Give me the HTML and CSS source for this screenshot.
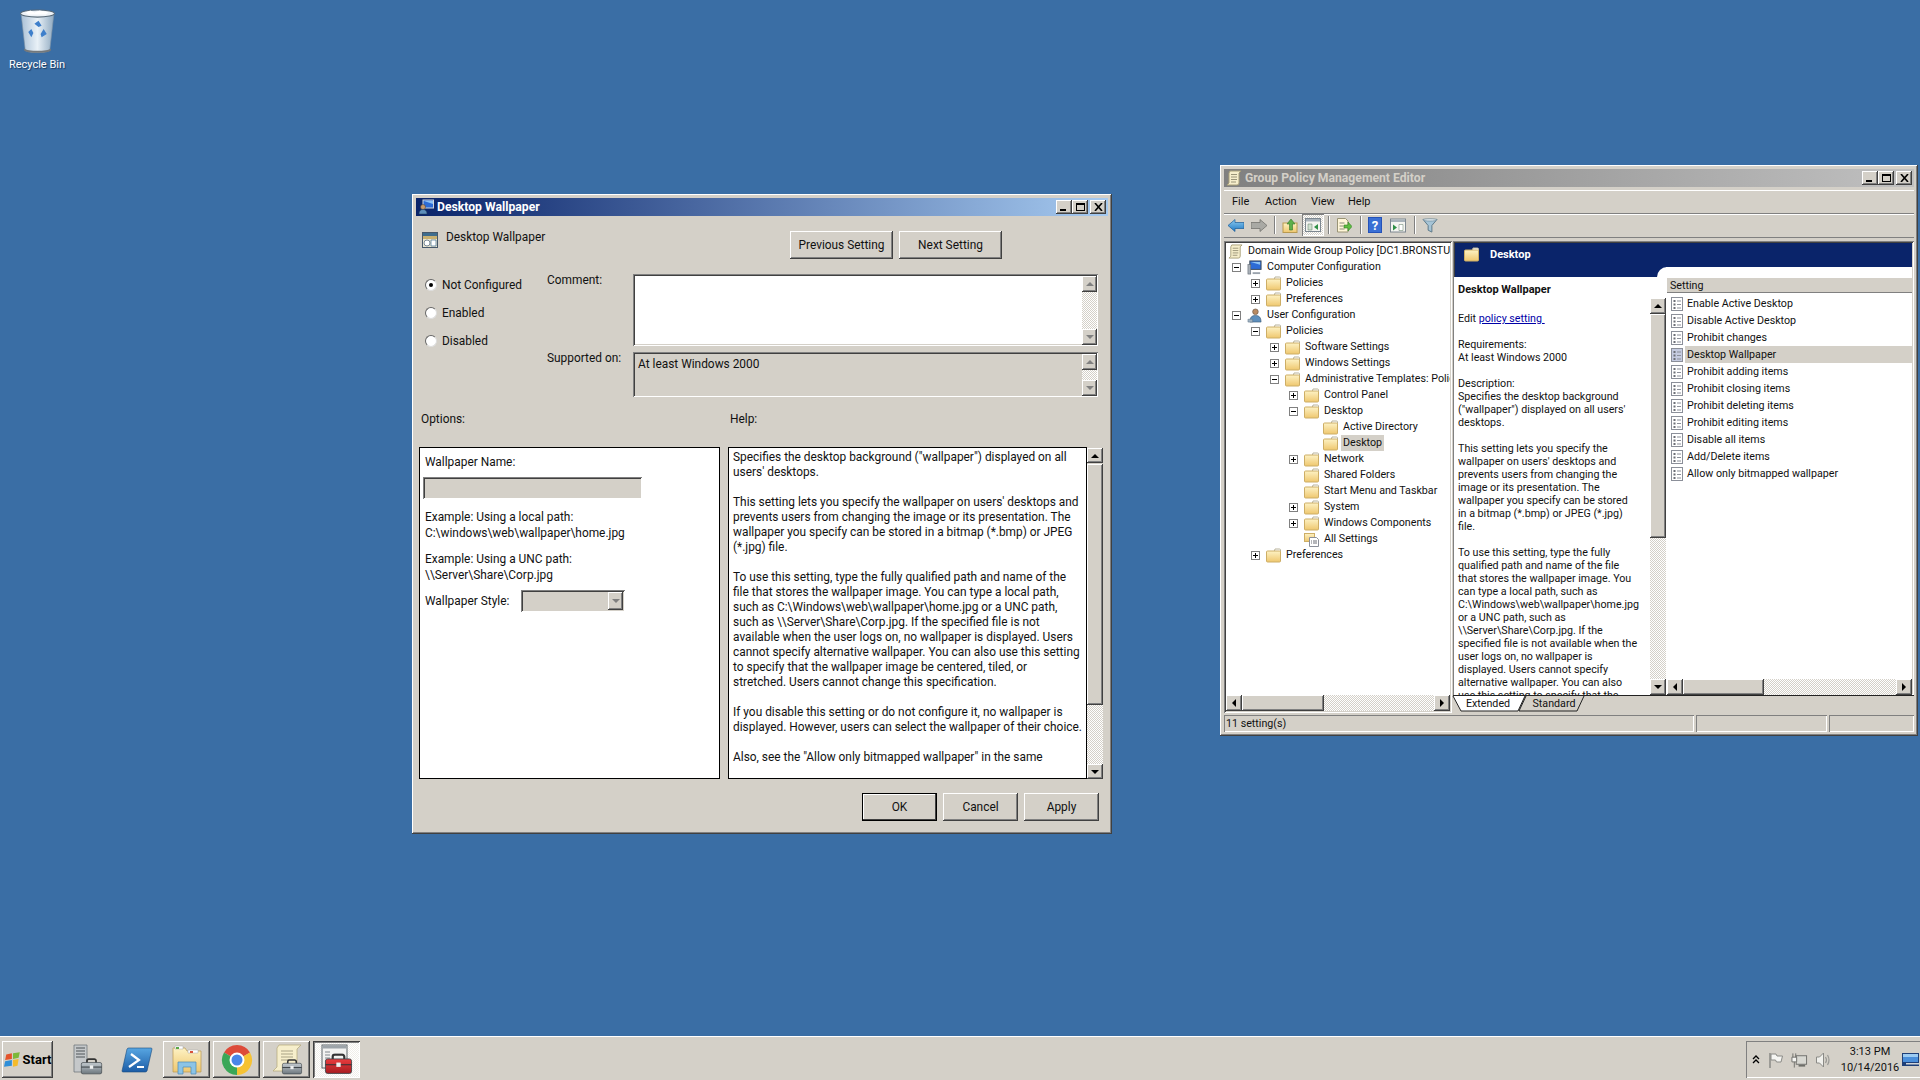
FILE: index.html
```html
<!DOCTYPE html>
<html lang="en">
	<head>
		<meta charset="UTF-8" />
		<title>Desktop Wallpaper</title>
		<link rel="stylesheet" href="styles.css">
	</head>
	<body>
		<!-- shared icons -->
		<svg class="defs" width="0" height="0">
			<defs>
				<linearGradient id="fold" x1="0" y1="0" x2="0" y2="1"><stop offset="0" stop-color="#fdf2c4"/><stop offset="1" stop-color="#efc76e"/></linearGradient>
				<linearGradient id="steel" x1="0" y1="0" x2="0" y2="1"><stop offset="0" stop-color="#c4cbd0"/><stop offset="1" stop-color="#6d777e"/></linearGradient>
				<linearGradient id="redbox" x1="0" y1="0" x2="0" y2="1"><stop offset="0" stop-color="#ea3c3e"/><stop offset="1" stop-color="#a81c20"/></linearGradient>
				<linearGradient id="ps" x1="0" y1="0" x2="0" y2="1"><stop offset="0" stop-color="#58a6e2"/><stop offset="1" stop-color="#1c5ca6"/></linearGradient>
				<linearGradient id="bluearrow" x1="0" y1="0" x2="0" y2="1"><stop offset="0" stop-color="#8ecbf0"/><stop offset="1" stop-color="#1f79c4"/></linearGradient>
				<linearGradient id="bin" x1="0" y1="0" x2="1" y2="0"><stop offset="0" stop-color="#a9c0d6"/><stop offset=".5" stop-color="#e9f1f7"/><stop offset="1" stop-color="#8fa9c0"/></linearGradient>
				<symbol id="folder" viewBox="0 0 15 14">
					<path d="M9 .5h4.5a1 1 0 0 1 1 1V4H8z" fill="#fff" stroke="#b8b29a"/>
					<rect x=".5" y="2.5" width="14" height="11" rx="1" fill="url(#fold)" stroke="#cdae66"/>
				</symbol>
				<symbol id="doc" viewBox="0 0 12 14">
					<rect x=".5" y=".5" width="11" height="13" fill="var(--doc-bg,#fff)" stroke="#8b8f99"/>
					<path d="M2.5 3h2v2h-2zM2.5 6.500h2v2h-2zM2.5 10h2v2h-2z" fill="#6c6f76"/>
					<path d="M6 4h4M6 7.500h4M6 11h4" stroke="#8b8f99"/>
				</symbol>
				<symbol id="scroll" viewBox="0 0 16 16">
					<path d="M4 1h11l-2 2v10a2 2 0 0 1-2 2H1l2-2V3z" fill="#f6eecb" stroke="#a89f78"/>
					<path d="M5 4.500h6M5 7h6M5 9.500h6M5 12h5" stroke="#9a9478"/>
				</symbol>
				<symbol id="toolbox" viewBox="0 0 20 15">
					<path d="M6 5V2.500a1.500 1.500 0 0 1 1.500-1.500h5A1.500 1.500 0 0 1 14 2.500V5" fill="none" stroke="#333" stroke-width="1.500"/>
					<rect x="1" y="4" width="18" height="10" rx="1.500" fill="var(--box,url(#steel))" stroke="#3e454a" stroke-width=".6"/>
					<path d="M1 8h18" stroke="#2d3337" stroke-width=".8"/>
					<rect x="8.500" y="6.500" width="3" height="3" fill="#eef0f0"/>
				</symbol>
				<symbol id="smallpc" viewBox="0 0 16 16">
					<rect x="3" y="1" width="12" height="9" fill="#2c6bd6" stroke="#3a4654"/>
					<path d="M4 2h10v3z" fill="#8cc2f5"/>
					<rect x="1" y="5" width="3" height="10" fill="#a9b0b8" stroke="#5b6470" stroke-width=".6"/>
					<path d="M6 13h8v2H6z" fill="#9aa3ad"/>
				</symbol>
				<symbol id="user" viewBox="0 0 16 16">
					<circle cx="9" cy="4" r="3" fill="#b98b62" stroke="#5a4a3a" stroke-width=".6"/>
					<path d="M3 15c0-5 2-7 6-7s6 2 6 7z" fill="#5e8fbc" stroke="#36536e" stroke-width=".6"/>
					<path d="M1 12h5v3H1z" fill="#9fb2c2" stroke="#5b6f82" stroke-width=".5"/>
				</symbol>
			</defs>
		</svg>

		<div class="desktop">
			<div class="recycle">
				<svg class="bin-icon" viewBox="0 0 36 44">
					<path d="M2 5l4 35c0 2 6 3 12 3s12-1 12-3l4-35z" fill="url(#bin)" stroke="#7e93a6" stroke-width=".6"/>
					<ellipse cx="18" cy="5" rx="16.500" ry="3.500" fill="#eef3f7" stroke="#566877"/>
					<path d="M6 4l5-2 4 2 5-2 5 1 4 1-3 2H9z" fill="#fff"/>
					<path d="M5 39c3 3 23 3 26 0v2c-2 3-24 3-26 0z" fill="#73787c"/>
					<path d="M15 15l4-3 3 5-3 1zM24 20l3 5-5 3-1-3zM12 28l-3-5 3-3 2 4 z" fill="#3e7fcb"/>
				</svg>
				<div class="recycle-label">Recycle Bin</div>
			</div>

			<!-- dialog -->
			<div class="win dialog">
				<div class="titlebar">
					<svg class="ic16" viewBox="0 0 16 16">
						<rect x="5" y="1" width="10.500" height="8" fill="#2c6bd6" stroke="#cfd6dc"/>
						<path d="M6 2h9v3z" fill="#8cc2f5"/>
						<circle cx="5" cy="8" r="2.500" fill="#c79a6e" stroke="#40372c" stroke-width=".5"/>
						<path d="M1 15c0-3 1.500-4.500 4-4.500S9 12 9 15z" fill="#5e8fbc" stroke="#25405a" stroke-width=".5"/>
					</svg>
					<span class="title-text">Desktop Wallpaper</span>
					<div class="wbtns">
						<div class="wbtn raised"><span class="g-min"></span></div>
						<div class="wbtn raised"><span class="g-max"></span></div>
						<div class="wbtn raised closebtn">
							<svg viewBox="0 0 9 8" width="9" height="8"><path d="M1 0l7 8M8 0L1 8" stroke="#000" stroke-width="1.600"/></svg>
						</div>
					</div>
				</div>
				<div class="dlg-head">
					<svg class="head-icon" viewBox="0 0 16 16">
						<rect x=".5" y=".5" width="15" height="15" fill="#e8e4d0" stroke="#46586a"/>
						<rect x="1" y="1" width="14" height="3" fill="#3f6d8e"/>
						<rect x="1" y="4" width="14" height="3" fill="#c8b070"/>
						<circle cx="5" cy="11" r="3" fill="#fff" stroke="#7b8a96"/>
						<path d="M9 8h5v6H9z" fill="#fff" stroke="#3f6d8e" stroke-width=".7"/>
					</svg>
					<span class="head-text">Desktop Wallpaper</span>
					<div class="head-btns">
						<div class="btn raised">Previous Setting</div>
						<div class="btn raised">Next Setting</div>
					</div>
				</div>
				<div class="config">
					<div class="radios">
						<div class="radio-row"><span class="radio on"></span>Not Configured</div>
						<div class="radio-row"><span class="radio"></span>Enabled</div>
						<div class="radio-row"><span class="radio"></span>Disabled</div>
					</div>
					<div class="config-fields">
						<div class="cfg-label">Comment:</div>
						<div class="box sunken box-comment">
							<div class="box-text"></div>
							<div class="sbar">
								<div class="sb-btn raised"><span class="arrow up off"></span></div>
								<div class="sb-track"></div>
								<div class="sb-btn raised"><span class="arrow down off"></span></div>
							</div>
						</div>
						<div class="cfg-label">Supported on:</div>
						<div class="box sunken box-support">
							<div class="box-text">At least Windows 2000</div>
							<div class="sbar">
								<div class="sb-btn raised"><span class="arrow up off"></span></div>
								<div class="sb-track"></div>
								<div class="sb-btn raised"><span class="arrow down off"></span></div>
							</div>
						</div>
					</div>
				</div>
				<div class="section-labels">
					<div class="lbl-options">Options:</div>
					<div>Help:</div>
				</div>
				<div class="panels">
					<div class="panel options">
						<div>Wallpaper Name:</div>
						<div class="field sunken"></div>
						<div class="example">Example: Using a local path:<br>C:\windows\web\wallpaper\home.jpg</div>
						<div class="example">Example: Using a UNC path:<br>\\Server\Share\Corp.jpg</div>
						<div class="style-row">
							<span class="style-label">Wallpaper Style:</span>
							<div class="combo sunken">
								<div class="combo-btn raised"><span class="arrow down off"></span></div>
							</div>
						</div>
					</div>
					<div class="help-wrap">
						<div class="panel help">Specifies the desktop background ("wallpaper") displayed on all<br>users' desktops.<br><br>This setting lets you specify the wallpaper on users' desktops and<br>prevents users from changing the image or its presentation. The<br>wallpaper you specify can be stored in a bitmap (*.bmp) or JPEG<br>(*.jpg) file.<br><br>To use this setting, type the fully qualified path and name of the<br>file that stores the wallpaper image. You can type a local path,<br>such as C:\Windows\web\wallpaper\home.jpg or a UNC path,<br>such as \\Server\Share\Corp.jpg. If the specified file is not<br>available when the user logs on, no wallpaper is displayed. Users<br>cannot specify alternative wallpaper. You can also use this setting<br>to specify that the wallpaper image be centered, tiled, or<br>stretched. Users cannot change this specification.<br><br>If you disable this setting or do not configure it, no wallpaper is<br>displayed. However, users can select the wallpaper of their choice.<br><br>Also, see the "Allow only bitmapped wallpaper" in the same</div>
						<div class="sbar help-sbar">
							<div class="sb-btn raised"><span class="arrow up"></span></div>
							<div class="sb-thumb raised"></div>
							<div class="sb-track"></div>
							<div class="sb-btn raised"><span class="arrow down"></span></div>
						</div>
					</div>
				</div>
				<div class="dlg-foot">
					<div class="btn foot-btn default raised">OK</div>
					<div class="btn foot-btn raised">Cancel</div>
					<div class="btn foot-btn raised">Apply</div>
				</div>
			</div>

			<!-- group policy editor -->
			<div class="win gpme">
				<div class="titlebar inactive">
					<svg class="ic16"><use href="#scroll"/></svg>
					<span class="title-text">Group Policy Management Editor</span>
					<div class="wbtns">
						<div class="wbtn raised"><span class="g-min"></span></div>
						<div class="wbtn raised"><span class="g-max"></span></div>
						<div class="wbtn raised closebtn">
							<svg viewBox="0 0 9 8" width="9" height="8"><path d="M1 0l7 8M8 0L1 8" stroke="#000" stroke-width="1.600"/></svg>
						</div>
					</div>
				</div>
				<div class="menubar">
					<span class="m-file">File</span><span class="m-action">Action</span><span class="m-view">View</span><span>Help</span>
				</div>
				<div class="toolbar">
					<svg class="tb-ic tb-nav" viewBox="0 0 16 14"><path d="M0 7l7-6v3h9v6H7v3z" fill="url(#bluearrow)" stroke="#1a5c9a" stroke-width=".7"/></svg>
					<svg class="tb-ic tb-nav" viewBox="0 0 16 14"><path d="M16 7L9 1v3H0v6h9v3z" fill="#a9a9a4" stroke="#6a6a66" stroke-width=".7"/></svg>
					<span class="tb-sep"></span>
					<svg class="tb-ic tb-up" viewBox="0 0 15 15"><rect x=".5" y="5" width="14" height="9.500" fill="url(#fold)" stroke="#b99a50"/><path d="M7 12V6H4.500L8.500 1l4 5H10v6z" fill="#5cb04a" stroke="#34762a" stroke-width=".6"/></svg>
					<span class="tb-toggle">
						<svg viewBox="0 0 16 14" width="16" height="14"><rect x=".5" y=".5" width="15" height="13" fill="#f4f4f0" stroke="#7d8790"/><rect x="1" y="1" width="14" height="2.500" fill="#a8b2ba"/><path d="M3 6h4v6H3z" fill="#cfe0cf" stroke="#5d7a64" stroke-width=".5"/><path d="M13 6v6l-4-3z" fill="#2f8f46"/></svg>
					</span>
					<span class="tb-sep"></span>
					<svg class="tb-ic" viewBox="0 0 16 15"><path d="M1.500.5h8l2.500 2.500v11h-10.500z" fill="#fff6d8" stroke="#9a9476"/><path d="M3.500 5h5M3.500 8h4M3.500 11h5" stroke="#8a8a7a"/><path d="M8 7h4V4l4 4.500-4 4.500v-3H8z" fill="#5fbd42" stroke="#2f7d24" stroke-width=".6"/></svg>
					<span class="tb-sep"></span>
					<svg class="tb-ic tb-help" viewBox="0 0 14 16"><rect width="14" height="16" fill="#2552b8"/><rect x="1" y="1" width="12" height="14" fill="#3a6fd4"/><text x="7" y="13" text-anchor="middle" class="help-q">?</text></svg>
					<svg class="tb-ic" viewBox="0 0 16 14"><rect x=".5" y=".5" width="15" height="13" fill="#f4f4f0" stroke="#7d8790"/><rect x="1" y="1" width="14" height="2.500" fill="#a8b2ba"/><path d="M3 6v6l4-3z" fill="#2f8f46"/><path d="M9 6h4v6H9z" fill="#fff" stroke="#5d7a64" stroke-width=".5"/></svg>
					<span class="tb-sep"></span>
					<svg class="tb-ic" viewBox="0 0 16 16"><path d="M.5 1.500h15L10 8v7l-4-2V8z" fill="#a6c4d6" stroke="#5a7686"/><ellipse cx="8" cy="2" rx="7.500" ry="1.200" fill="#e1ecf2" stroke="#5a7686" stroke-width=".6"/></svg>
				</div>
				<div class="gp-main">
					<div class="tree-pane sunken">
						<div class="tree">
							<div class="tree-row root"><svg class="ic15"><use href="#scroll"/></svg><span class="lbl">Domain Wide Group Policy [DC1.BRONSTUFF.LOCAL]</span></div>
							<div class="tree-row l1"><span class="exp minus"></span><svg class="ic15"><use href="#smallpc"/></svg><span class="lbl">Computer Configuration</span></div>
							<div class="tree-row l2"><span class="exp plus"></span><svg class="ic15"><use href="#folder"/></svg><span class="lbl">Policies</span></div>
							<div class="tree-row l2"><span class="exp plus"></span><svg class="ic15"><use href="#folder"/></svg><span class="lbl">Preferences</span></div>
							<div class="tree-row l1"><span class="exp minus"></span><svg class="ic15"><use href="#user"/></svg><span class="lbl">User Configuration</span></div>
							<div class="tree-row l2"><span class="exp minus"></span><svg class="ic15"><use href="#folder"/></svg><span class="lbl">Policies</span></div>
							<div class="tree-row l3"><span class="exp plus"></span><svg class="ic15"><use href="#folder"/></svg><span class="lbl">Software Settings</span></div>
							<div class="tree-row l3"><span class="exp plus"></span><svg class="ic15"><use href="#folder"/></svg><span class="lbl">Windows Settings</span></div>
							<div class="tree-row l3"><span class="exp minus"></span><svg class="ic15"><use href="#folder"/></svg><span class="lbl">Administrative Templates: Policy definitions</span></div>
							<div class="tree-row l4"><span class="exp plus"></span><svg class="ic15"><use href="#folder"/></svg><span class="lbl">Control Panel</span></div>
							<div class="tree-row l4"><span class="exp minus"></span><svg class="ic15"><use href="#folder"/></svg><span class="lbl">Desktop</span></div>
							<div class="tree-row l5"><span class="exp none"></span><svg class="ic15"><use href="#folder"/></svg><span class="lbl">Active Directory</span></div>
							<div class="tree-row l5"><span class="exp none"></span><svg class="ic15"><use href="#folder"/></svg><span class="lbl sel">Desktop</span></div>
							<div class="tree-row l4"><span class="exp plus"></span><svg class="ic15"><use href="#folder"/></svg><span class="lbl">Network</span></div>
							<div class="tree-row l4"><span class="exp none"></span><svg class="ic15"><use href="#folder"/></svg><span class="lbl">Shared Folders</span></div>
							<div class="tree-row l4"><span class="exp none"></span><svg class="ic15"><use href="#folder"/></svg><span class="lbl">Start Menu and Taskbar</span></div>
							<div class="tree-row l4"><span class="exp plus"></span><svg class="ic15"><use href="#folder"/></svg><span class="lbl">System</span></div>
							<div class="tree-row l4"><span class="exp plus"></span><svg class="ic15"><use href="#folder"/></svg><span class="lbl">Windows Components</span></div>
							<div class="tree-row l4"><span class="exp none"></span><svg class="ic15" viewBox="0 0 15 15"><rect x=".5" y="1.500" width="10" height="8" fill="url(#fold)" stroke="#cdae66"/><path d="M5.500 5.500h7l2 2v7h-9z" fill="#fff" stroke="#8b8f99"/><path d="M7 9h1M9 9h4M7 11h1M9 11h4" stroke="#6c6f76"/></svg><span class="lbl">All Settings</span></div>
							<div class="tree-row l2"><span class="exp plus"></span><svg class="ic15"><use href="#folder"/></svg><span class="lbl">Preferences</span></div>
						</div>
						<div class="hbar">
							<div class="sb-btn raised"><span class="arrow left"></span></div>
							<div class="sb-thumb raised tree-thumb"></div>
							<div class="sb-track"></div>
							<div class="sb-btn raised"><span class="arrow right"></span></div>
						</div>
					</div>
					<div class="splitter"></div>
					<div class="gp-right">
						<div class="ext-pane sunken">
							<div class="ext-desc">
								<div class="ext-head"><svg class="ic15"><use href="#folder"/></svg><span>Desktop</span></div>
								<div class="desc-text">
									<div class="desc-title">Desktop Wallpaper</div>
									<div class="desc-edit">Edit <a class="link">policy setting&nbsp;</a></div>
									Requirements:<br>At least Windows 2000<br><br>Description:<br>Specifies the desktop background<br>("wallpaper") displayed on all users'<br>desktops.<br><br>This setting lets you specify the<br>wallpaper on users' desktops and<br>prevents users from changing the<br>image or its presentation. The<br>wallpaper you specify can be stored<br>in a bitmap (*.bmp) or JPEG (*.jpg)<br>file.<br><br>To use this setting, type the fully<br>qualified path and name of the file<br>that stores the wallpaper image. You<br>can type a local path, such as<br>C:\Windows\web\wallpaper\home.jpg<br>or a UNC path, such as<br>\\Server\Share\Corp.jpg. If the<br>specified file is not available when the<br>user logs on, no wallpaper is<br>displayed. Users cannot specify<br>alternative wallpaper. You can also<br>use this setting to specify that the
								</div>
							</div>
							<div class="ext-mid">
								<div class="sbar desc-sbar">
									<div class="sb-btn raised"><span class="arrow up"></span></div>
									<div class="sb-thumb raised desc-thumb"></div>
									<div class="sb-track"></div>
									<div class="sb-btn raised"><span class="arrow down"></span></div>
								</div>
							</div>
							<div class="ext-list">
								<span class="list-corner"></span>
								<div class="list-head">Setting</div>
								<div class="list-rows">
									<div class="list-row"><svg class="doc-ic"><use href="#doc"/></svg><span class="lbl">Enable Active Desktop</span></div>
									<div class="list-row"><svg class="doc-ic"><use href="#doc"/></svg><span class="lbl">Disable Active Desktop</span></div>
									<div class="list-row"><svg class="doc-ic"><use href="#doc"/></svg><span class="lbl">Prohibit changes</span></div>
									<div class="list-row sel"><svg class="doc-ic"><use href="#doc"/></svg><span class="lbl">Desktop Wallpaper</span></div>
									<div class="list-row"><svg class="doc-ic"><use href="#doc"/></svg><span class="lbl">Prohibit adding items</span></div>
									<div class="list-row"><svg class="doc-ic"><use href="#doc"/></svg><span class="lbl">Prohibit closing items</span></div>
									<div class="list-row"><svg class="doc-ic"><use href="#doc"/></svg><span class="lbl">Prohibit deleting items</span></div>
									<div class="list-row"><svg class="doc-ic"><use href="#doc"/></svg><span class="lbl">Prohibit editing items</span></div>
									<div class="list-row"><svg class="doc-ic"><use href="#doc"/></svg><span class="lbl">Disable all items</span></div>
									<div class="list-row"><svg class="doc-ic"><use href="#doc"/></svg><span class="lbl">Add/Delete items</span></div>
									<div class="list-row"><svg class="doc-ic"><use href="#doc"/></svg><span class="lbl">Allow only bitmapped wallpaper</span></div>
								</div>
								<div class="hbar">
									<div class="sb-btn raised"><span class="arrow left"></span></div>
									<div class="sb-thumb raised list-thumb"></div>
									<div class="sb-track"></div>
									<div class="sb-btn raised"><span class="arrow right"></span></div>
								</div>
							</div>
						</div>
						<div class="tabs-row">
							<div class="tab tab-ext">
								<svg class="tab-shape" viewBox="0 0 72 16"><path d="M0 0l8 15h57l7-15" fill="#fff" stroke="#222"/></svg>
								<span>Extended</span>
							</div>
							<div class="tab tab-std">
								<svg class="tab-shape" viewBox="0 0 72 16"><path d="M7 0l-7 15h58l7-15" fill="#d4d0c8" stroke="#222"/></svg>
								<span>Standard</span>
							</div>
						</div>
					</div>
				</div>
				<div class="statusbar">
					<div class="status-cell status-a">11 setting(s)</div>
					<div class="status-cell status-b"></div>
					<div class="status-cell status-c"></div>
				</div>
			</div>
		</div>

		<!-- taskbar -->
		<div class="taskbar">
			<div class="start raised">
				<svg class="flag" viewBox="0 0 16 14"><path d="M2 2l5-1v5l-6 1z" fill="#e4532b"/><path d="M8 1l6-1-1 5-5 1z" fill="#7cb83a"/><path d="M1 8l6-1v5l-7 1z" fill="#2f8fd8"/><path d="M8 7l5-1-1 6-4 1z" fill="#f4bb2c"/></svg>
				<span>Start</span>
			</div>
			<div class="task">
				<svg class="task-ic" viewBox="0 0 32 32">
					<path d="M3 1h13v27H3z" fill="#c5c8ca" stroke="#666d72" stroke-width=".7"/>
					<path d="M5 4h9M5 7h9M5 10h9M5 13h9" stroke="#4e5458"/>
					<svg x="9" y="14" width="23" height="17" viewBox="0 0 20 15"><use href="#toolbox"/></svg>
				</svg>
			</div>
			<div class="task">
				<svg class="task-ic" viewBox="0 0 32 32">
					<path d="M8 4h22a1 1 0 0 1 1 1l-5 22a2 2 0 0 1-2 1H2a1 1 0 0 1-1-1L6 5a2 2 0 0 1 2-1z" fill="url(#ps)" stroke="#17497e" stroke-width=".6"/>
					<path d="M10 10l8 6-10 7" fill="none" stroke="#fff" stroke-width="2.200"/>
					<path d="M16 23h7" stroke="#fff" stroke-width="2"/>
				</svg>
			</div>
			<div class="task raised">
				<svg class="task-ic" viewBox="0 0 32 32">
					<path d="M2 4h12l2 3h14v21H2z" fill="url(#fold)" stroke="#b99a50" stroke-width=".7"/>
					<path d="M4 2h8v3H4zM17 6h10v3H17z" fill="#fff" stroke="#aaa" stroke-width=".5"/>
					<path d="M5 3h3v2H5z" fill="#5aa845"/><path d="M19 7h3v2h-3z" fill="#d8513a"/>
					<path d="M7 18h18v12h-5v-7h-8v7H7z" fill="#8cc4e6" stroke="#4b8bb5" stroke-width=".7"/>
				</svg>
			</div>
			<div class="task raised">
				<svg class="task-ic" viewBox="0 0 32 32">
					<path d="M16 16L3 8.500A15 15 0 0 1 29 8.500z" fill="#dd4b39"/>
					<path d="M16 16L3 8.500A15 15 0 0 0 16 31z" fill="#3aa757"/>
					<path d="M16 16v15A15 15 0 0 0 29 8.500z" fill="#f6c233"/>
					<circle cx="16" cy="16" r="7.500" fill="#fff"/>
					<circle cx="16" cy="16" r="5.500" fill="#4a86e8"/>
				</svg>
			</div>
			<div class="task raised">
				<svg class="task-ic" viewBox="0 0 32 32">
					<path d="M8 1h22l-4 4v22H2l4-4V4z" fill="#f6eecb" stroke="#b3a877" stroke-width=".7"/>
					<path d="M10 7h12M10 10h12M10 13h12M10 16h8" stroke="#a8a285"/>
					<svg x="10" y="15" width="22" height="16" viewBox="0 0 20 15"><use href="#toolbox"/></svg>
				</svg>
			</div>
			<div class="task active">
				<svg class="task-ic" viewBox="0 0 32 32">
					<rect x="1" y="1" width="25" height="23" fill="#f3f3f1" stroke="#5d6468"/>
					<rect x="1.500" y="1.500" width="24" height="3" fill="#9da4a9"/>
					<path d="M4 8h5M4 11h5M4 14h5M4 17h5" stroke="#80878c"/>
					<svg class="redbox" x="3" y="9" width="29" height="22" viewBox="0 0 20 15"><use href="#toolbox"/></svg>
				</svg>
			</div>
			<div class="tray">
				<svg class="tray-chev" viewBox="0 0 8 9" width="8" height="9"><path d="M1 4l3-3 3 3M1 8l3-3 3 3" fill="none" stroke="#000" stroke-width="1.300"/></svg>
				<svg class="tray-ic" viewBox="0 0 16 16"><path d="M2.500 1v15" stroke="#8a8a86" stroke-width="1.500"/><path d="M3.500 2h5l1 2h5.500l-1.500 6H9L8 8H3.500z" fill="#f5f5f2" stroke="#8a8a86"/></svg>
				<svg class="tray-ic" viewBox="0 0 18 16"><rect x="5.500" y="3.500" width="11" height="9" fill="#d8d8d2" stroke="#6e6e6a"/><path d="M8 14h7" stroke="#6e6e6a" stroke-width="2"/><path d="M2 1v4M5 1v4M1 5h5v5H1zM3.500 10v6" fill="#f5f5f2" stroke="#6e6e6a"/></svg>
				<svg class="tray-ic" viewBox="0 0 16 16"><path d="M1 5h3l4-4v14l-4-4H1z" fill="#f0f0ec" stroke="#8a8a86"/><path d="M10 5q2 3 0 6M12 3q3 5 0 10" fill="none" stroke="#9a9a96" stroke-width="1.200"/></svg>
				<div class="clock">3:13 PM<br>10/14/2016</div>
				<svg class="show-desk" viewBox="0 0 17 13"><rect width="17" height="13" fill="#1e3f78"/><rect x="1" y="1" width="15" height="8" fill="#4b8fda"/><path d="M1 1h15v3H1z" fill="#9ccbf2"/><rect x="4" y="10" width="13" height="1.500" fill="#cfd4d8"/></svg>
			</div>
		</div>
	</body>
</html>
```

FILE: styles.css
```css
* {
	box-sizing: border-box;
}

html,
body {
	margin: 0;
	height: 100%;
	overflow: hidden;
}

body {
	display: flex;
	flex-direction: column;
	background-color: #3a6ea5;
	font-family: Roboto, "Noto Sans", sans-serif;
	font-size: 11.900px;
	color: #111;
}

.defs {
	position: absolute;
}

.desktop {
	position: relative;
	flex: 1;
}

/* bevels, used all over */
.raised {
	background-color: #d4d0c8;
	box-shadow: inset -1px -1px #404040, inset 1px 1px #fff, inset -2px -2px #808080, inset 2px 2px #d4d0c8;
}

.sunken {
	box-shadow: inset 1px 1px #808080, inset -1px -1px #fff, inset 2px 2px #404040, inset -2px -2px #d4d0c8;
}

.recycle {
	position: absolute;
	left: 8px;
	top: 8px;
	width: 58px;
	text-align: center;
}

.bin-icon {
	display: block;
	width: 37px;
	height: 46px;
	margin: 0 auto;
}

.recycle-label {
	margin-top: 3px;
	color: #fff;
	font-size: 11px;
	line-height: 16px;
	white-space: nowrap;
	text-shadow: 1px 1px 1px #1c3a5c;
}

/* windows */
.win {
	position: absolute;
	padding: 4px;
	background-color: #d4d0c8;
	box-shadow: inset -1px -1px #404040, inset 1px 1px #fff, inset -2px -2px #808080, inset 2px 2px #d4d0c8;
	display: flex;
	flex-direction: column;
}

.dialog {
	left: 412px;
	top: 194px;
	width: 700px;
	height: 640px;
}

.gpme {
	left: 1220px;
	top: 165px;
	width: 698px;
	height: 571px;
}

.titlebar {
	height: 18px;
	flex: none;
	display: flex;
	align-items: center;
	padding: 0 2px;
	background: linear-gradient(90deg, #0a246a, #a6caf0);
	color: #fff;
	font-size: 12.200px;
	font-weight: bold;
}

.titlebar.inactive {
	background: linear-gradient(90deg, #808080, #c0c0c0);
	color: #d4d0c8;
}

.title-text {
	margin-left: 3px;
	white-space: nowrap;
}

.ic16 {
	width: 16px;
	height: 16px;
	flex: none;
}

.ic15 {
	width: 15px;
	height: 15px;
	flex: none;
}

.wbtns {
	margin-left: auto;
	display: flex;
}

.wbtn {
	width: 16px;
	height: 14px;
	display: flex;
	align-items: center;
	justify-content: center;
}

.closebtn {
	margin-left: 2px;
}

.g-min {
	width: 6px;
	height: 2px;
	background-color: #000;
	margin: 6px 3px 0 0;
}

.g-max {
	width: 9px;
	height: 8px;
	border: 1px solid #000;
	border-top-width: 2px;
}

/* dialog */
.dlg-head {
	height: 58px;
	flex: none;
	display: flex;
	align-items: flex-start;
	padding: 15px 106px 0 6px;
}

.head-icon {
	width: 16px;
	height: 16px;
	margin-top: 1px;
}

.head-text {
	margin-left: 8px;
	line-height: 12px;
}

.head-btns {
	margin-left: auto;
	display: flex;
	gap: 6px;
}

.btn {
	width: 103px;
	height: 28px;
	display: flex;
	align-items: center;
	justify-content: center;
}

.config {
	display: flex;
	height: 123px;
	flex: none;
}

.radios {
	width: 131px;
	padding: 3px 0 0 9px;
	display: flex;
	flex-direction: column;
	gap: 12px;
}

.radio-row {
	display: flex;
	align-items: center;
	height: 16px;
	line-height: 16px;
}

.radio {
	position: relative;
	width: 12px;
	height: 12px;
	margin-right: 5px;
	border-radius: 50%;
	background-color: #fff;
	border: 1px solid;
	border-color: #666 #ddd #ddd #666;
}

.radio.on::after {
	content: "";
	position: absolute;
	left: 3px;
	top: 3px;
	width: 4px;
	height: 4px;
	border-radius: 50%;
	background-color: #000;
}

.config-fields {
	display: grid;
	grid-template-columns: 86px 465px;
	grid-template-rows: 72px 45px;
	row-gap: 6px;
}

.cfg-label {
	line-height: 12px;
}

.box {
	display: flex;
	padding: 2px 1px 1px 2px;
}

.box-comment {
	background-color: #fff;
}

.box-text {
	flex: 1;
	padding: 3px 0 0 3px;
	line-height: 14px;
}

.sbar {
	width: 15px;
	flex: none;
	display: flex;
	flex-direction: column;
}

.sb-btn {
	width: 15px;
	height: 16px;
	flex: none;
	display: flex;
	align-items: center;
	justify-content: center;
}

.sb-track {
	flex: 1;
	background-image: conic-gradient(#fff 25%, #d4d0c8 0 50%, #fff 0 75%, #d4d0c8 0);
	background-size: 2px 2px;
}

.sb-thumb {
	flex: none;
}

.arrow {
	width: 0;
	height: 0;
	border: 4px solid transparent;
}

.arrow.up {
	border-bottom-color: #000;
	border-top-width: 0;
}

.arrow.down {
	border-top-color: #000;
	border-bottom-width: 0;
}

.arrow.left {
	border-right-color: #000;
	border-left-width: 0;
}

.arrow.right {
	border-left-color: #000;
	border-right-width: 0;
}

.arrow.up.off {
	border-bottom-color: #808080;
}

.arrow.down.off {
	border-top-color: #808080;
}

.section-labels {
	height: 50px;
	flex: none;
	display: flex;
	padding: 14px 0 0 5px;
	line-height: 16px;
}

.lbl-options {
	width: 309px;
}

.panels {
	height: 332px;
	flex: none;
	display: flex;
	gap: 8px;
	padding-left: 3px;
}

.panel {
	background-color: #fff;
	border: 1px solid #000;
	line-height: 15px;
	white-space: nowrap;
	overflow: hidden;
}

.options {
	width: 301px;
	padding: 7px 5px 0 5px;
}

.field {
	width: 219px;
	height: 22px;
	margin: 7px 0 0 -2px;
	background-color: #d4d0c8;
}

.example {
	margin-top: 10px;
	line-height: 16px;
}

.style-row {
	display: flex;
	align-items: center;
	margin-top: 7px;
}

.style-label {
	width: 96px;
	flex: none;
}

.combo {
	width: 104px;
	height: 22px;
	background-color: #d4d0c8;
	display: flex;
	justify-content: flex-end;
	padding: 2px;
}

.combo-btn {
	width: 15px;
	height: 18px;
	display: flex;
	align-items: center;
	justify-content: center;
}

.help-wrap {
	display: flex;
}

.help {
	width: 359px;
	padding: 2px 0 0 4px;
}

.help-sbar {
	width: 16px;
	padding-top: 1px;
	background-color: #d4d0c8;
}

.help-sbar .sb-btn {
	width: 16px;
	height: 15px;
}

.help-sbar .sb-thumb {
	height: 241px;
	margin-top: 1px;
}

.dlg-foot {
	display: flex;
	justify-content: flex-end;
	gap: 6px;
	padding: 14px 9px 0 0;
}

.foot-btn {
	width: 75px;
}

.foot-btn.default {
	box-shadow: inset 0 0 0 1px #000, inset -2px -2px #404040, inset 2px 2px #fff;
}

/* group policy editor */
.menubar {
	height: 24px;
	flex: none;
	margin-top: 3px;
	display: flex;
	align-items: center;
	padding: 0 0 2px 8px;
	border-top: 1px solid #fff;
	border-bottom: 1px solid #808080;
	font-size: 11px;
}

.m-file {
	width: 33px;
}

.m-action {
	width: 46px;
}

.m-view {
	width: 37px;
}

.toolbar {
	height: 24px;
	flex: none;
	display: flex;
	align-items: center;
	border-top: 1px solid #fff;
	border-bottom: 1px solid #808080;
	padding: 0 0 2px 4px;
}

.tb-ic {
	width: 16px;
	height: 15px;
	margin-right: 8px;
	flex: none;
}

.tb-nav {
	margin-right: 7px;
}

.tb-up {
	margin-right: 4px;
}

.tb-help {
	width: 14px;
	height: 16px;
}

.help-q {
	fill: #fff;
	font-size: 13px;
	font-weight: bold;
}

.tb-sep {
	width: 2px;
	height: 18px;
	margin-right: 6px;
	border-left: 1px solid #808080;
	border-right: 1px solid #fff;
}

.tb-toggle {
	width: 22px;
	height: 22px;
	margin-right: 4px;
	display: flex;
	align-items: center;
	justify-content: center;
	background-image: conic-gradient(#fff 25%, #d4d0c8 0 50%, #fff 0 75%, #d4d0c8 0);
	background-size: 2px 2px;
	box-shadow: inset 1px 1px #808080, inset -1px -1px #fff;
}

.gp-main {
	flex: none;
	height: 472px;
	margin-top: 3px;
	display: flex;
	font-size: 10.700px;
}

.tree-pane {
	width: 228px;
	flex: none;
	padding: 2px;
	background-color: #fff;
	display: flex;
	flex-direction: column;
}

.tree {
	flex: 1;
	overflow: hidden;
}

.tree-row {
	height: 16px;
	display: flex;
	align-items: center;
	white-space: nowrap;
}

.tree-row.root {
	padding-left: 2px;
}

.tree-row.l1 {
	padding-left: 6px;
}

.tree-row.l2 {
	padding-left: 25px;
}

.tree-row.l3 {
	padding-left: 44px;
}

.tree-row.l4 {
	padding-left: 63px;
}

.tree-row.l5 {
	padding-left: 82px;
}

.exp {
	position: relative;
	width: 9px;
	height: 9px;
	margin-right: 6px;
	flex: none;
	border: 1px solid #808080;
	background-color: #fff;
}

.exp.none {
	border: 0;
	background: none;
}

.exp.plus::before,
.exp.minus::before {
	content: "";
	position: absolute;
	left: 1px;
	top: 3px;
	width: 5px;
	height: 1px;
	background-color: #000;
}

.exp.plus::after {
	content: "";
	position: absolute;
	left: 3px;
	top: 1px;
	width: 1px;
	height: 5px;
	background-color: #000;
}

.lbl {
	margin-left: 3px;
	padding: 0 2px;
	line-height: 16px;
}

.lbl.sel {
	background-color: #d4d0c8;
}

.hbar {
	height: 16px;
	flex: none;
	display: flex;
	background-color: #d4d0c8;
}

.hbar .sb-btn {
	width: 16px;
	height: 16px;
}

.tree-thumb {
	width: 82px;
}

.hbar .sb-track {
	flex: 1;
}

.splitter {
	width: 1px;
	flex: none;
}

.gp-right {
	flex: 1;
	min-width: 0;
	display: flex;
	flex-direction: column;
}

.ext-pane {
	flex: 1;
	min-height: 0;
	padding: 1px 2px 0 1px;
	display: flex;
	background-color: #0a246a;
	overflow: hidden;
}

.ext-desc {
	width: 196px;
	flex: none;
	display: flex;
	flex-direction: column;
}

.ext-head {
	height: 35px;
	flex: none;
	display: flex;
	align-items: flex-start;
	padding: 5px 0 0 10px;
	color: #fff;
	font-size: 11px;
	font-weight: bold;
}

.ext-head span {
	margin-left: 11px;
	line-height: 16px;
}

.desc-text {
	flex: 1;
	background-color: #fff;
	padding: 6px 0 0 4px;
	line-height: 13px;
	white-space: nowrap;
	overflow: hidden;
}

.desc-title {
	font-size: 11px;
	font-weight: bold;
	margin-bottom: 16px;
}

.desc-edit {
	margin-bottom: 13px;
}

.link {
	color: #0000a8;
	text-decoration: underline;
}

.ext-mid {
	width: 16px;
	flex: none;
	margin-top: 35px;
	padding-top: 21px;
	background-color: #fff;
	display: flex;
}

.desc-sbar {
	width: 16px;
	background-color: #d4d0c8;
}

.desc-sbar .sb-btn {
	width: 16px;
}

.desc-thumb {
	height: 224px;
}

.ext-list {
	position: relative;
	flex: 1;
	min-width: 0;
	margin-top: 25px;
	padding-left: 1px;
	background-color: #fff;
	display: flex;
	flex-direction: column;
}

.list-corner {
	position: absolute;
	left: -9px;
	top: 0;
	width: 18px;
	height: 11px;
	background-color: #fff;
	border-top-left-radius: 10px;
}

.list-head {
	margin-top: 11px;
	height: 15px;
	flex: none;
	padding-left: 3px;
	background-color: #d4d0c8;
	border-bottom: 1px solid #808080;
	line-height: 16px;
}

.list-rows {
	flex: 1;
	padding-top: 2px;
}

.list-row {
	height: 17px;
	display: flex;
	align-items: center;
	padding-left: 4px;
}

.doc-ic {
	width: 12px;
	height: 14px;
	flex: none;
}

.list-row .lbl {
	flex: 1;
	margin-left: 2px;
	padding: 0 0 0 2px;
	line-height: 17px;
	white-space: nowrap;
}

.list-row.sel {
	--doc-bg: #c5cbe0;
}

.list-row.sel .lbl {
	background-color: #d4d0c8;
}

.list-thumb {
	width: 81px;
}

.tabs-row {
	height: 18px;
	flex: none;
	display: flex;
	border-top: 1px solid #222;
}

.tab {
	position: relative;
	width: 66px;
	height: 16px;
	display: flex;
	align-items: center;
	justify-content: center;
	padding: 0 0 1px 4px;
}

.tab span {
	position: relative;
}

.tab-shape {
	position: absolute;
	left: 0;
	top: 0;
	width: 72px;
	height: 16px;
	overflow: visible;
}

.statusbar {
	flex: 1;
	display: flex;
	gap: 2px;
	margin-top: 2px;
	font-size: 10.700px;
}

.status-cell {
	display: flex;
	align-items: center;
	padding-left: 2px;
	box-shadow: inset 1px 1px #808080, inset -1px -1px #fff;
}

.status-a {
	width: 473px;
}

.status-b {
	width: 131px;
}

.status-c {
	width: 86px;
}

/* taskbar */
.taskbar {
	height: 44px;
	flex: none;
	display: flex;
	align-items: flex-start;
	padding: 4px 0 0 2px;
	gap: 3px;
	background-color: #d4d0c8;
	border-top: 1px solid #fff;
}

.start {
	width: 51px;
	height: 37px;
	margin-right: 7px;
	display: flex;
	align-items: center;
	justify-content: center;
	gap: 1px;
	font-weight: bold;
	font-size: 13px;
	color: #000;
}

.flag {
	width: 18px;
	height: 16px;
}

.task {
	width: 47px;
	height: 37px;
	display: flex;
	align-items: center;
	justify-content: center;
}

.task-ic {
	width: 32px;
	height: 32px;
}

.task.active {
	background-image: conic-gradient(#fff 25%, #f0eee9 0 50%, #fff 0 75%, #f0eee9 0);
	background-size: 2px 2px;
	box-shadow: inset 1px 1px #404040, inset -1px -1px #fff, inset 2px 2px #808080;
}

.redbox {
	--box: url(#redbox);
}

.tray {
	margin-left: auto;
	width: 174px;
	height: 37px;
	display: flex;
	align-items: center;
	padding-left: 6px;
	box-shadow: inset 1px 1px #808080, inset 0 -1px #fff;
}

.tray-chev {
	margin-right: 7px;
}

.tray-ic {
	width: 17px;
	height: 16px;
	margin-right: 7px;
}

.clock {
	width: 62px;
	text-align: center;
	line-height: 16px;
	font-size: 11px;
	white-space: nowrap;
}

.show-desk {
	width: 17px;
	height: 13px;
	margin-left: 1px;
}
```
